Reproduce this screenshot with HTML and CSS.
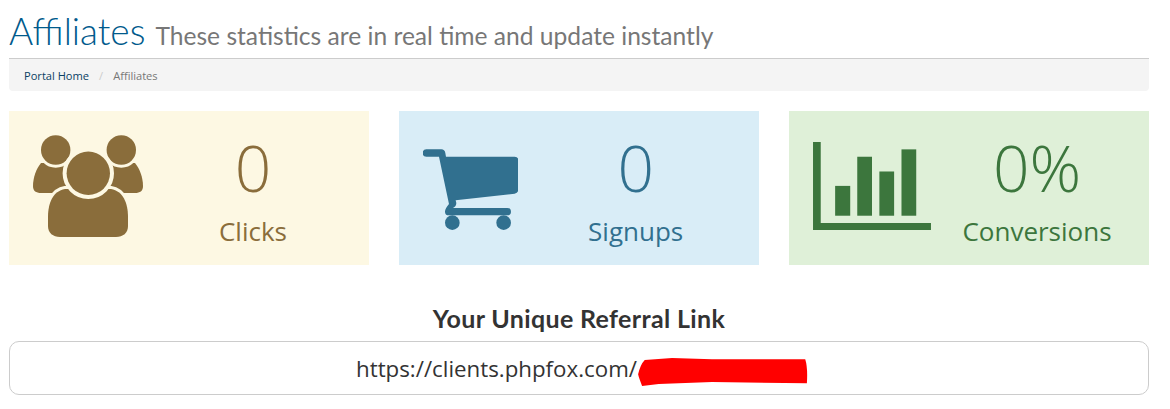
FILE: index.html
```html
<!DOCTYPE html>
<html lang="en">
<head>
    <meta charset="UTF-8">
    <meta name="viewport" content="width=device-width, initial-scale=1.0">
    <title>Affiliates</title>
    <link rel="stylesheet" href="styles.css">
</head>
<body>
    <div class="container">
        <h1 class="page-title">Affiliates <small>These statistics are in real time and update instantly</small></h1>
        <div class="breadcrumb">
            <a href="#">Portal Home</a>
            <span class="sep">/</span>
            <span class="current">Affiliates</span>
        </div>

        <div class="stats">
            <div class="stat-card stat-clicks">
                <svg class="stat-icon icon-users" viewBox="0 0 110 103">
                    <path class="solid" d="M8 28C3 34 0 43 0 51C0 56 3 58 8 58H40V28Z"/>
                    <path class="solid" d="M102 28C107 34 110 43 110 51C110 56 107 58 102 58H70V28Z"/>
                    <circle class="ringed" cx="22.7" cy="15" r="14.7"/>
                    <circle class="ringed" cx="88.3" cy="15" r="14.7"/>
                    <path class="ringed" d="M32 54C20 56 15 68 15 82V91C15 98 20 102 27 102H83C90 102 95 98 95 91V82C95 68 90 56 78 54Z"/>
                    <circle class="ringed ring-wide" cx="55.3" cy="38.3" r="21.7"/>
                </svg>
                <div class="stat-text">
                    <div class="stat-num">0</div>
                    <div class="stat-label">Clicks</div>
                </div>
            </div>
            <div class="stat-card stat-signups">
                <svg class="stat-icon icon-cart" viewBox="100 133 286 245">
                    <path class="solid" d="M110 134H155Q165 134 167 145L169 156H375Q386 156 386 167V255Q386 265 375 267L198 287L200 295Q200 305 190 310H353A11 11 0 0 1 353 332H177A11 11 0 0 1 166 321Q166 312 178 298L148 156H110A11 11 0 0 1 110 134Z"/>
                    <circle class="solid" cx="188" cy="354" r="22"/>
                    <circle class="solid" cx="342" cy="354" r="22"/>
                </svg>
                <div class="stat-text">
                    <div class="stat-num">0</div>
                    <div class="stat-label">Signups</div>
                </div>
            </div>
            <div class="stat-card stat-conversions">
                <svg class="stat-icon icon-chart" viewBox="100 112 352 265">
                    <path class="solid" d="M100 112H123V354H452V377H100Z"/>
                    <rect class="solid" x="166" y="243" width="45" height="89"/>
                    <rect class="solid" x="232" y="156" width="44" height="176"/>
                    <rect class="solid" x="298" y="200" width="44" height="132"/>
                    <rect class="solid" x="364" y="134" width="44" height="198"/>
                </svg>
                <div class="stat-text">
                    <div class="stat-num">0%</div>
                    <div class="stat-label">Conversions</div>
                </div>
            </div>
        </div>

        <h2 class="link-title">Your Unique Referral Link</h2>
        <div class="link-box">
            <span>https://clients.phpfox.com/</span><svg class="redact" viewBox="898 186 510 85">
                <path d="M918 192L1000 186L1120 190L1400 190Q1408 215 1405 262L1120 258L960 264L910 270Q900 245 898 235Q905 205 918 192Z"/>
            </svg>
        </div>
    </div>
</body>
</html>
```

FILE: styles.css
```css
body {
    font-family: "Open Sans", sans-serif;
    margin: 0;
    padding: 0 21px 0 9px;
    background-color: #fff;
    overflow: hidden;
}
.page-title {
    margin: 0;
    height: 59px;
    box-sizing: border-box;
    padding-top: 9px;
    font-family: Lato, sans-serif;
    font-size: 37px;
    line-height: 44px;
    font-weight: 300;
    color: #005a8c;
    border-bottom: 1px solid #ccc;
}
.page-title small {
    font-size: 24.6px;
    font-weight: 400;
    color: #777;
}
.breadcrumb {
    height: 32px;
    padding: 0 15px;
    display: flex;
    align-items: center;
    background-color: #f4f4f4;
    border-radius: 0 0 4px 4px;
    font-size: 11.1px;
    color: #777;
}
.breadcrumb a {
    color: #0a3f63;
    text-decoration: none;
}
.breadcrumb .sep {
    color: #ccc;
    margin: 0 10px;
}
.stats {
    display: grid;
    grid-template-columns: repeat(3, 360px);
    gap: 30px;
    margin-top: 20px;
}
.stat-card {
    height: 154px;
    padding-left: 24px;
    display: flex;
    align-items: center;
}
.stat-clicks {
    background-color: #fdf8e3;
    color: #8a6d3b;
    --card-bg: #fdf8e3;
}
.stat-signups {
    background-color: #d9edf7;
    color: #31708f;
}
.stat-conversions {
    background-color: #dff0d8;
    color: #3c763d;
}
.stat-icon {
    flex: none;
    fill: currentColor;
}
.icon-users {
    width: 110px;
    height: 103px;
    margin-top: -3px;
}
.icon-cart {
    width: 95.3px;
    height: 81.7px;
    margin-top: 4px;
}
.icon-chart {
    width: 118px;
    height: 88.8px;
    margin-top: -4px;
}
.ringed {
    stroke: var(--card-bg);
    stroke-width: 6px;
    paint-order: stroke;
}
.ring-wide {
    stroke-width: 8px;
}
.stat-text {
    flex: 1;
    text-align: center;
    padding-right: 6px;
}
.stat-num {
    font-size: 64px;
    font-weight: 300;
    line-height: 70px;
    margin-top: 6px;
}
.stat-label {
    font-size: 26px;
    line-height: 36px;
    margin-top: 10px;
}
.link-title {
    margin: 38px 0 0;
    height: 38px;
    text-align: center;
    font-family: Lato, sans-serif;
    font-size: 25px;
    letter-spacing: 0.35px;
    line-height: 30px;
    font-weight: 700;
    color: #333;
}
.link-box {
    height: 54px;
    box-sizing: border-box;
    border: 1px solid #ccc;
    border-radius: 10px;
    display: flex;
    align-items: center;
    justify-content: center;
    font-size: 22.3px;
    color: #333;
    padding-left: 6px;
}
.redact {
    width: 170px;
    height: 28.3px;
    fill: #f00;
    margin: 9px 0 0 1px;
}
```
